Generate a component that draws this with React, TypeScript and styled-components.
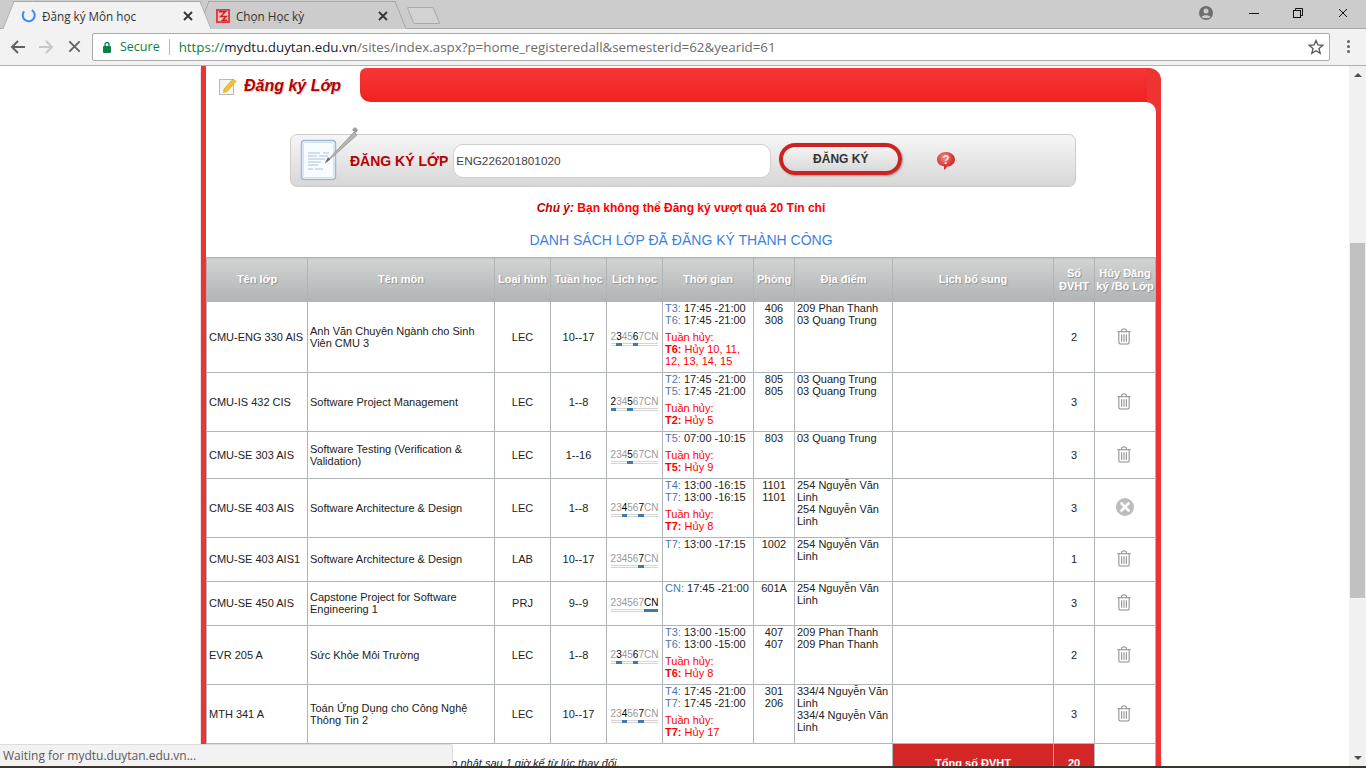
import * as React from 'react';
import styled, { createGlobalStyle } from 'styled-components';

interface Course {
  code: string;
  name: string;
  kind: string;
  weeks: string;
  days: string[];
  times: [string, string][];
  cancel?: [string, string];
  rooms: string[];
  places: string[];
  credits: number;
  height: number;
  locked?: boolean;
}

const COURSES: Course[] = [
  {
    code: 'CMU-ENG 330 AIS',
    name: 'Anh Văn Chuyên Ngành cho Sinh Viên CMU 3',
    kind: 'LEC',
    weeks: '10--17',
    days: ['3', '6'],
    times: [['T3', '17:45 -21:00'], ['T6', '17:45 -21:00']],
    cancel: ['T6', 'Hủy 10, 11, 12, 13, 14, 15'],
    rooms: ['406', '308'],
    places: ['209 Phan Thanh', '03 Quang Trung'],
    credits: 2,
    height: 71,
  },
  {
    code: 'CMU-IS 432 CIS',
    name: 'Software Project Management',
    kind: 'LEC',
    weeks: '1--8',
    days: ['2', '5'],
    times: [['T2', '17:45 -21:00'], ['T5', '17:45 -21:00']],
    cancel: ['T2', 'Hủy 5'],
    rooms: ['805', '805'],
    places: ['03 Quang Trung', '03 Quang Trung'],
    credits: 3,
    height: 59,
  },
  {
    code: 'CMU-SE 303 AIS',
    name: 'Software Testing (Verification & Validation)',
    kind: 'LEC',
    weeks: '1--16',
    days: ['5'],
    times: [['T5', '07:00 -10:15']],
    cancel: ['T5', 'Hủy 9'],
    rooms: ['803'],
    places: ['03 Quang Trung'],
    credits: 3,
    height: 47,
  },
  {
    code: 'CMU-SE 403 AIS',
    name: 'Software Architecture & Design',
    kind: 'LEC',
    weeks: '1--8',
    days: ['4', '7'],
    times: [['T4', '13:00 -16:15'], ['T7', '13:00 -16:15']],
    cancel: ['T7', 'Hủy 8'],
    rooms: ['1101', '1101'],
    places: ['254 Nguyễn Văn Linh', '254 Nguyễn Văn Linh'],
    credits: 3,
    height: 59,
    locked: true,
  },
  {
    code: 'CMU-SE 403 AIS1',
    name: 'Software Architecture & Design',
    kind: 'LAB',
    weeks: '10--17',
    days: ['7'],
    times: [['T7', '13:00 -17:15']],
    rooms: ['1002'],
    places: ['254 Nguyễn Văn Linh'],
    credits: 1,
    height: 44,
  },
  {
    code: 'CMU-SE 450 AIS',
    name: 'Capstone Project for Software Engineering 1',
    kind: 'PRJ',
    weeks: '9--9',
    days: ['CN'],
    times: [['CN', '17:45 -21:00']],
    rooms: ['601A'],
    places: ['254 Nguyễn Văn Linh'],
    credits: 3,
    height: 44,
  },
  {
    code: 'EVR 205 A',
    name: 'Sức Khỏe Môi Trường',
    kind: 'LEC',
    weeks: '1--8',
    days: ['3', '6'],
    times: [['T3', '13:00 -15:00'], ['T6', '13:00 -15:00']],
    cancel: ['T6', 'Hủy 8'],
    rooms: ['407', '407'],
    places: ['209 Phan Thanh', '209 Phan Thanh'],
    credits: 2,
    height: 59,
  },
  {
    code: 'MTH 341 A',
    name: 'Toán Ứng Dụng cho Công Nghệ Thông Tin 2',
    kind: 'LEC',
    weeks: '10--17',
    days: ['4', '7'],
    times: [['T4', '17:45 -21:00'], ['T7', '17:45 -21:00']],
    cancel: ['T7', 'Hủy 17'],
    rooms: ['301', '206'],
    places: ['334/4 Nguyễn Văn Linh', '334/4 Nguyễn Văn Linh'],
    credits: 3,
    height: 59,
  },
];

const DAY_LABELS = ['2', '3', '4', '5', '6', '7', 'CN'];
const COLUMN_WIDTHS = [101, 187, 56, 56, 56, 91, 41, 98, 161, 41, 61];
const HEADERS = [
  'Tên lớp',
  'Tên môn',
  'Loại hình',
  'Tuần học',
  'Lịch học',
  'Thời gian',
  'Phòng',
  'Địa điểm',
  'Lịch bổ sung',
  'Số ĐVHT',
  'Hủy Đăng ký /Bỏ Lớp',
];

const CloseGlyph: React.FC<{ size?: number; color?: string; weight?: number }> = ({
  size = 10,
  color = '#333',
  weight = 1.8,
}) => (
  <svg width={size} height={size} viewBox="0 0 10 10">
    <path d="M1 1 L9 9 M9 1 L1 9" stroke={color} strokeWidth={weight} fill="none" />
  </svg>
);

const TrashIcon = () => (
  <svg width="15" height="17" viewBox="0 0 16 18" fill="none" stroke="#8a8a8a" strokeWidth="1.1">
    <path d="M1 4 H15" />
    <path d="M5.5 3.8 V2.4 Q5.5 1 7 1 H9 Q10.500 1 10.500 2.400 V3.800" />
    <path d="M2.500 4 V15.500 Q2.500 17 4 17 H12 Q13.500 17 13.500 15.500 V4" />
    <path d="M5.500 6.500 V14.500 M8 6.500 V14.500 M10.500 6.500 V14.500" />
  </svg>
);

const LockedIcon = () => (
  <svg width="18" height="18" viewBox="0 0 18 18">
    <circle cx="9" cy="9" r="9" fill="#bdbdbd" />
    <path d="M5.500 5.500 L12.500 12.500 M12.500 5.500 L5.500 12.500" stroke="#fff" strokeWidth="2.600" strokeLinecap="round" />
  </svg>
);

const NoteIcon = () => (
  <svg width="60" height="56" viewBox="0 0 60 56">
    <rect x="2.500" y="15.500" width="34" height="39" rx="3" fill="#f3f8fd" stroke="#9db8d4" strokeWidth="1.500" />
    <rect x="4.500" y="17.500" width="30" height="35" rx="2" fill="#f8fbff" stroke="#d5e3f1" />
    <path
      d="M9 28 H21 M24 28 H30 M9 31 H18 M20 31 H29 M9 34 H26 M9 37 H22 M9 40 H19 M9 44 H14 M16 44 H24"
      stroke="#a8c0d8"
      strokeWidth="1"
    />
    <path d="M26 38 L55 7 L58 10 L29 36 Z" fill="#b5b5b5" stroke="#8f8f8f" strokeWidth="0.700" />
    <path d="M26 38 L29 32 L31 34.500 Z" fill="#666" />
    <path d="M53 5 L56 2 L59 5 L57 8 Z" fill="#9a9a9a" />
  </svg>
);

const HelpIcon = () => (
  <svg width="20" height="20" viewBox="0 0 20 20">
    <defs>
      <radialGradient id="helpFill" cx="0.400" cy="0.300" r="0.800">
        <stop offset="0" stopColor="#f08a8a" />
        <stop offset="0.600" stopColor="#d63838" />
        <stop offset="1" stopColor="#a81e1e" />
      </radialGradient>
    </defs>
    <path d="M10 1 C15 1 19 4.200 19 8.500 C19 12.800 15 15.500 11.500 15.500 L8 19 L8 15.300 C4 14.800 1 12.300 1 8.500 C1 4.200 5 1 10 1 Z" fill="url(#helpFill)" />
    <text x="10" y="13" textAnchor="middle" fontFamily="'Liberation Sans', sans-serif" fontSize="12" fontWeight="700" fill="#fbe4e4">?</text>
  </svg>
);

const PencilNoteIcon = () => (
  <svg width="18" height="18" viewBox="0 0 18 18">
    <rect x="0.500" y="2.500" width="14" height="15" fill="#f4f4f4" stroke="#b8b8b8" />
    <path d="M5 12 L14 2 L17 4.500 L8 14.500 L4.500 15.500 Z" fill="#f2c530" stroke="#c79a17" strokeWidth="0.600" />
  </svg>
);

const SchoolFavicon = () => (
  <svg width="14" height="14" viewBox="0 0 15 15">
    <rect width="15" height="15" fill="#e23a3a" />
    <rect x="2" y="2" width="11" height="11" fill="#f4c2c2" />
    <path d="M3 3 H10 L5 8 H11 L7 12 H12" stroke="#c92323" strokeWidth="1.500" fill="none" />
  </svg>
);

const App: React.FC = () => (
  <Screen>
    <GlobalStyle />
    <TabStrip>
      <Tab $active>
        <svg width="15" height="15" viewBox="0 0 15 15" fill="none">
          <path d="M10.800 2.100 A6 6 0 1 1 3.200 3.300" stroke="#4285f4" strokeWidth="2" />
        </svg>
        <TabTitle>Đăng ký Môn học</TabTitle>
        <CloseGlyph />
      </Tab>
      <Tab>
        <SchoolFavicon />
        <TabTitle>Chọn Học kỳ</TabTitle>
        <CloseGlyph />
      </Tab>
      <NewTab />
      <WindowControls>
        <svg width="16" height="16" viewBox="0 0 16 16">
          <circle cx="8" cy="8" r="7" fill="#6e6e6e" />
          <circle cx="8" cy="6" r="2.500" fill="#ccc" />
          <path d="M3.500 12 C4.500 9.500 11.500 9.500 12.500 12 C11 13.600 5 13.600 3.500 12 Z" fill="#ccc" />
        </svg>
        <svg width="10" height="10" viewBox="0 0 10 10">
          <path d="M0 5.500 H10" stroke="#111" strokeWidth="1" />
        </svg>
        <svg width="10" height="10" viewBox="0 0 10 10" fill="none" stroke="#111">
          <rect x="0.500" y="2.500" width="7" height="7" />
          <path d="M2.500 2.500 V0.500 H9.500 V7.500 H7.500" />
        </svg>
        <CloseGlyph color="#111" weight={1} />
      </WindowControls>
    </TabStrip>

    <Toolbar>
      <NavButton>
        <svg width="16" height="14" viewBox="0 0 16 14" fill="none" stroke="#5f6368" strokeWidth="2">
          <path d="M15 7 H2 M8 1 L2 7 L8 13" />
        </svg>
      </NavButton>
      <NavButton>
        <svg width="16" height="14" viewBox="0 0 16 14" fill="none" stroke="#c8c8c8" strokeWidth="2">
          <path d="M1 7 H14 M8 1 L14 7 L8 13" />
        </svg>
      </NavButton>
      <NavButton>
        <CloseGlyph size={13} color="#5f6368" weight={1.400} />
      </NavButton>
      <AddressBar>
        <svg width="10" height="12" viewBox="0 0 10 12">
          <rect x="1" y="5" width="8" height="7" rx="1" fill="#0b8043" />
          <path d="M3 5.500 V3.500 A2 2 0 0 1 7 3.500 V5.500" fill="none" stroke="#0b8043" strokeWidth="1.300" />
        </svg>
        <Secure>Secure</Secure>
        <AddressDivider />
        <Url>
          <UrlScheme>https://</UrlScheme>
          <UrlHost>mydtu.duytan.edu.vn</UrlHost>
          /sites/index.aspx?p=home_registeredall&amp;semesterid=62&amp;yearid=61
        </Url>
        <svg width="16" height="16" viewBox="0 0 16 16" fill="none" stroke="#555" strokeWidth="1.300">
          <path d="M8 1.500 L9.900 6 L14.700 6.400 L11 9.500 L12.200 14.300 L8 11.700 L3.800 14.300 L5 9.500 L1.300 6.400 L6.100 6 Z" />
        </svg>
      </AddressBar>
      <MenuDots>
        <i />
        <i />
        <i />
      </MenuDots>
    </Toolbar>

    <Viewport>
      <Page>
        <Card>
          <CardHeader>
            <CardTab>
              <PencilNoteIcon />
              <CardTitle>Đăng ký Lớp</CardTitle>
            </CardTab>
            <CardStrip />
          </CardHeader>
          <CardBody>
            <RegisterBox>
              <NoteSlot>
                <NoteIcon />
              </NoteSlot>
              <RegisterLabel>ĐĂNG KÝ LỚP</RegisterLabel>
              <CodeInput readOnly value="ENG226201801020" />
              <RegisterButton type="button">ĐĂNG KÝ</RegisterButton>
              <HelpSlot>
                <HelpIcon />
              </HelpSlot>
            </RegisterBox>
            <Notice>
              <NoticeLead>Chú ý:</NoticeLead> Bạn không thể Đăng ký vượt quá 20 Tín chỉ
            </Notice>
            <ListTitle>DANH SÁCH LỚP ĐÃ ĐĂNG KÝ THÀNH CÔNG</ListTitle>
            <CourseTable>
              <colgroup>
                {COLUMN_WIDTHS.map((width, i) => (
                  <col key={i} width={width} />
                ))}
              </colgroup>
              <thead>
                <tr>
                  {HEADERS.map((header) => (
                    <HeadCell key={header}>{header}</HeadCell>
                  ))}
                </tr>
              </thead>
              <tbody>
                {COURSES.map((course) => (
                  <CourseRow key={course.code} $height={course.height}>
                    <TextCell>{course.code}</TextCell>
                    <TextCell>{course.name}</TextCell>
                    <CenterCell>{course.kind}</CenterCell>
                    <CenterCell>{course.weeks}</CenterCell>
                    <CenterCell>
                      <Days>
                        {DAY_LABELS.map((day) => (
                          <Day key={day} $active={course.days.includes(day)}>
                            {day}
                          </Day>
                        ))}
                      </Days>
                    </CenterCell>
                    <TopCell>
                      {course.times.map(([day, time]) => (
                        <div key={day}>
                          <DayName>{day}:</DayName> {time}
                        </div>
                      ))}
                      {course.cancel && (
                        <CancelBlock>
                          <div>Tuần hủy:</div>
                          <b>{course.cancel[0]}:</b> {course.cancel[1]}
                        </CancelBlock>
                      )}
                    </TopCell>
                    <TopCenterCell>
                      {course.rooms.map((room, i) => (
                        <div key={i}>{room}</div>
                      ))}
                    </TopCenterCell>
                    <TopCell>
                      {course.places.map((place, i) => (
                        <div key={i}>{place}</div>
                      ))}
                    </TopCell>
                    <TextCell />
                    <CenterCell>{course.credits}</CenterCell>
                    <ActionCell $nudge={!course.locked}>
                      {course.locked ? <LockedIcon /> : <TrashIcon />}
                    </ActionCell>
                  </CourseRow>
                ))}
                <CourseRow $height={40}>
                  <NoteCell colSpan={8}>Dữ liệu sẽ được cập nhật sau 1 giờ kể từ lúc thay đổi.</NoteCell>
                  <TotalCell>Tổng số ĐVHT</TotalCell>
                  <TotalCell>20</TotalCell>
                  <TextCell />
                </CourseRow>
              </tbody>
            </CourseTable>
          </CardBody>
        </Card>
        <StatusBubble>Waiting for mydtu.duytan.edu.vn...</StatusBubble>
      </Page>
      <Scrollbar>
        <ScrollArrow $dir="up" />
        <ScrollThumb />
        <ScrollArrow $dir="down" />
      </Scrollbar>
    </Viewport>
    <Taskbar />
  </Screen>
);

export default App;

const GlobalStyle = createGlobalStyle`
  html, body {
    margin: 0;
    padding: 0;
    overflow: hidden;
    background: #fff;
  }
  * {
    box-sizing: border-box;
  }
`;

const Screen = styled.div`
  display: flex;
  flex-direction: column;
  width: 1366px;
  height: 768px;
  overflow: hidden;
  font-family: 'Liberation Sans', Arial, sans-serif;
`;

const TabStrip = styled.div`
  display: flex;
  align-items: flex-end;
  flex: 0 0 29px;
  padding-left: 17px;
  background: #cccccc;
  border-bottom: 1px solid #a8a8a8;
`;

const Tab = styled.div<{ $active?: boolean }>`
  position: relative;
  display: flex;
  align-items: center;
  gap: 6px;
  width: 180px;
  height: 28px;
  margin-right: 15px;
  margin-bottom: -1px;
  padding: 0 4px 0 4px;
  font-family: 'Open Sans', sans-serif;
  font-size: 11.700px;
  color: #333;
  background: ${(p) => (p.$active ? '#f2f2f2' : '#cccccc')};
  border-top: 1px solid #a8a8a8;
  z-index: ${(p) => (p.$active ? 2 : 1)};
  &::before,
  &::after {
    content: '';
    position: absolute;
    top: -1px;
    bottom: 0;
    width: 18px;
    background: inherit;
    border-top: 1px solid #a8a8a8;
    z-index: -1;
  }
  &::before {
    left: -9px;
    transform: skewX(-22deg);
    border-left: 1px solid #a8a8a8;
  }
  &::after {
    right: -9px;
    transform: skewX(22deg);
    border-right: 1px solid #a8a8a8;
  }
`;

const TabTitle = styled.span`
  flex: 1;
  white-space: nowrap;
`;

const NewTab = styled.div`
  align-self: flex-start;
  width: 27px;
  height: 17px;
  margin: 7px 0 0 3px;
  background: #d2d2d2;
  border: 1px solid #a8a8a8;
  border-radius: 2px;
  transform: skewX(22deg);
`;

const WindowControls = styled.div`
  display: flex;
  align-items: center;
  justify-content: space-between;
  align-self: flex-start;
  width: 150px;
  height: 16px;
  margin: 5px 18px 0 auto;
`;

const Toolbar = styled.div`
  display: flex;
  align-items: center;
  flex: 0 0 37px;
  padding: 0 0 1px 4px;
  background: #f2f2f2;
  border-bottom: 1px solid #b0b0b0;
`;

const NavButton = styled.div`
  display: flex;
  align-items: center;
  justify-content: center;
  width: 28px;
  height: 28px;
`;

const AddressBar = styled.div`
  display: flex;
  align-items: center;
  width: 1238px;
  height: 28px;
  margin-left: 4px;
  padding: 0 5px 0 9px;
  background: #fff;
  border: 1px solid #aaaaaa;
  border-radius: 2px;
`;

const Secure = styled.span`
  margin-left: 8px;
  font-family: 'Open Sans', sans-serif;
  font-size: 12.500px;
  color: #0b8043;
`;

const AddressDivider = styled.span`
  width: 1px;
  height: 16px;
  margin: 0 9px;
  background: #b8b8b8;
`;

const Url = styled.span`
  flex: 1;
  font-family: 'Open Sans', sans-serif;
  font-size: 13.350px;
  color: #6b6b6b;
  white-space: nowrap;
`;

const UrlScheme = styled.span`
  color: #0b8043;
`;

const UrlHost = styled.span`
  color: #1a1a2a;
`;

const MenuDots = styled.div`
  display: flex;
  flex-direction: column;
  align-items: center;
  gap: 2px;
  width: 36px;
  i {
    display: block;
    width: 3px;
    height: 3px;
    border-radius: 50%;
    background: #5f6368;
  }
`;

const Viewport = styled.div`
  position: relative;
  display: flex;
  flex: 1;
  min-height: 0;
  background: #fff;
`;

const Page = styled.div`
  flex: 1;
  min-width: 0;
  padding: 2px 0 0 201px;
  overflow: hidden;
  background: linear-gradient(#ee3333, #ee3333) 201px 0 / 5px 2px no-repeat;
`;

const Card = styled.div`
  width: 960px;
  padding: 0 5px;
  background: #ee3333;
  border-radius: 0 12px 0 0;
  overflow: hidden;
  box-shadow: -1px 0 0 #e6e6e6;
`;

const CardHeader = styled.div`
  display: flex;
  height: 34px;
`;

const CardTab = styled.div`
  display: flex;
  align-items: center;
  gap: 7px;
  width: 154px;
  padding: 2px 0 0 13px;
  background: #fff;
`;

const CardTitle = styled.span`
  font-size: 16px;
  font-weight: bold;
  font-style: italic;
  color: #b50000;
  text-shadow: 1px 1px 1px #ccc;
`;

const CardStripBack = styled.div`
  flex: 1;
  background: linear-gradient(#fff, #fff) left / 30px 100% no-repeat;
`;

const CardStripFill = styled.div`
  height: 100%;
  margin-right: 9px;
  background: linear-gradient(#f63636, #f02222);
  border-radius: 6px 0 0 10px;
`;

const CardStrip = () => (
  <CardStripBack>
    <CardStripFill />
  </CardStripBack>
);

const CardBody = styled.div`
  padding-top: 32px;
  background: #fff;
  border-radius: 0 10px 0 0;
`;

const RegisterBox = styled.div`
  display: flex;
  align-items: center;
  width: 786px;
  height: 53px;
  margin-left: 84px;
  padding-left: 8px;
  background: linear-gradient(#f6f6f6, #d7d7d7);
  border: 1px solid #cccccc;
  border-radius: 7px;
`;

const NoteSlot = styled.div`
  flex: 0 0 50px;
  height: 40px;
  margin: -32px -9px 0 0;
  svg {
    display: block;
  }
`;

const RegisterLabel = styled.span`
  margin-right: 5px;
  font-size: 14px;
  font-weight: bold;
  color: #bb0000;
  white-space: nowrap;
`;

const CodeInput = styled.input`
  width: 318px;
  height: 34px;
  margin-right: 8px;
  padding: 0 2px;
  font-family: inherit;
  font-size: 11.800px;
  color: #444;
  background: #fff;
  border: 1px solid #cfcfcf;
  border-radius: 10px;
  outline: none;
`;

const RegisterButton = styled.button`
  width: 123px;
  height: 32px;
  margin-top: -4px;
  font-family: inherit;
  font-size: 12px;
  font-weight: bold;
  color: #333;
  background: linear-gradient(#f4f4f4, #d9d9d9);
  border: 4px solid #cc2222;
  border-radius: 16px;
  box-shadow: 1px 1px 2px #999;
`;

const HelpSlot = styled.div`
  display: flex;
  margin-left: 34px;
`;

const Notice = styled.div`
  margin-top: 14px;
  font-size: 12px;
  line-height: 14px;
  font-weight: bold;
  text-align: center;
  color: #ff0000;
`;

const NoticeLead = styled.i`
  color: #c00000;
`;

const ListTitle = styled.div`
  margin: 17px 0 8px;
  height: 17px;
  font-size: 14px;
  line-height: 17px;
  text-align: center;
  color: #3b82e0;
`;

const CourseTable = styled.table`
  width: 949px;
  table-layout: fixed;
  border-collapse: collapse;
  font-size: 11px;
  line-height: 12px;
  color: #222;
`;

const HeadCell = styled.th`
  height: 44px;
  padding: 0;
  font-size: 11px;
  font-weight: bold;
  line-height: 13px;
  color: #fff;
  text-shadow: 1px 1px 1px #8f9396;
  background: linear-gradient(#d2d3d2, #b1b4b6);
  border: 1px solid #b0b5b9;
`;

const CourseRow = styled.tr<{ $height: number }>`
  height: ${(p) => p.$height}px;
`;

const TextCell = styled.td`
  padding: 0 2px 1px;
  vertical-align: middle;
  border: 1px solid #b0b5b9;
`;

const CenterCell = styled(TextCell)`
  text-align: center;
`;

const ActionCell = styled(CenterCell)<{ $nudge: boolean }>`
  padding-bottom: 2px;
  svg {
    display: block;
    margin: 0 auto;
    transform: translateX(${(p) => (p.$nudge ? '-1.5px' : '0')});
  }
`;

const TopCell = styled(TextCell)`
  vertical-align: top;
`;

const TopCenterCell = styled(TopCell)`
  text-align: center;
`;

const NoteCell = styled(TextCell)`
  padding-left: 152px;
  font-style: italic;
  border-left: none;
`;

const TotalCell = styled(CenterCell)`
  font-weight: bold;
  color: #fff;
  background: #d32626;
`;

const DayName = styled.span`
  color: #4a78b0;
`;

const CancelBlock = styled.div`
  margin-top: 5px;
  color: #ff0000;
`;

const Days = styled.div`
  display: inline-flex;
  padding-top: 3px;
  font-size: 10px;
  line-height: 12px;
`;

const Day = styled.span<{ $active: boolean }>`
  color: ${(p) => (p.$active ? '#000' : '#999')};
  border-bottom: ${(p) => (p.$active ? '3px solid #3d7ab0' : '3px double #d4d4d4')};
`;

const StatusBubble = styled.div`
  position: absolute;
  left: 0;
  bottom: 0;
  width: 453px;
  height: 22px;
  padding: 3px 0 0 3px;
  font-family: 'Open Sans', sans-serif;
  font-size: 12px;
  line-height: 16px;
  color: #5a5a5a;
  background: #f2f2f2;
  border-top: 1px solid #dcdcdc;
  border-right: 1px solid #dcdcdc;
  border-radius: 0 3px 0 0;
`;

const Scrollbar = styled.div`
  display: flex;
  flex-direction: column;
  flex: 0 0 17px;
  background: #f1f1f1;
`;

const ScrollArrow = styled.div<{ $dir: 'up' | 'down' }>`
  flex: 0 0 17px;
  display: flex;
  align-items: center;
  justify-content: center;
  margin-top: ${(p) => (p.$dir === 'down' ? 'auto' : '0')};
  &::after {
    content: '';
    border-left: 4px solid transparent;
    border-right: 4px solid transparent;
    ${(p) => (p.$dir === 'up' ? 'border-bottom: 4px solid #505050;' : 'border-top: 4px solid #505050;')}
  }
`;

const ScrollThumb = styled.div`
  height: 355px;
  margin: 160px 0 0 1px;
  width: 15px;
  background: #c1c1c1;
`;

const Taskbar = styled.div`
  flex: 0 0 2px;
  background: #3a352e;
`;
